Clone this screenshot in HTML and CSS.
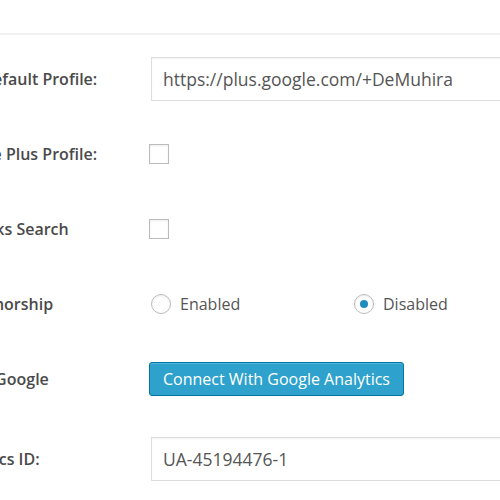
FILE: index.html
```html
<!DOCTYPE html>
<html lang="en">

<head>
    <meta charset="UTF-8">
    <meta name="viewport" content="width=device-width, initial-scale=1.0">
    <title>Google Settings</title>
    <link rel="stylesheet" href="styles.css">
</head>

<body>
    <div class="divider"></div>

    <div class="settings">
        <div class="row">
            <label class="row-label" for="gplus">Google Plus Default Profile:</label>
            <div class="row-field">
                <input class="text-input" id="gplus" type="text" value="https://plus.google.com/+DeMuhira">
            </div>
        </div>

        <div class="row">
            <label class="row-label">Disable Google Plus Profile:</label>
            <div class="row-field">
                <span class="checkbox"></span>
            </div>
        </div>

        <div class="row">
            <label class="row-label">Display Sitelinks Search</label>
            <div class="row-field">
                <span class="checkbox"></span>
            </div>
        </div>

        <div class="row">
            <label class="row-label">Advanced Authorship</label>
            <div class="row-field">
                <span class="radio-option"><span class="radio"></span>Enabled</span>
                <span class="radio-option"><span class="radio checked"></span>Disabled</span>
            </div>
        </div>

        <div class="row">
            <label class="row-label">Connect With Google</label>
            <div class="row-field">
                <button class="button-primary">Connect With Google Analytics</button>
            </div>
        </div>

        <div class="row row-last">
            <label class="row-label" for="gaid">Google Analytics ID:</label>
            <div class="row-field">
                <input class="text-input" id="gaid" type="text" value="UA-45194476-1">
            </div>
        </div>
    </div>
</body>

</html>
```

FILE: styles.css
```css
html, body {
    margin: 0;
    padding: 0;
    background-color: #fff;
    overflow: hidden;
    font-family: "Open Sans", "Liberation Sans", sans-serif;
    color: #444;
}

.divider {
    margin-top: 33px;
    height: 2px;
    background-color: #f1f1f1;
}

.settings {
    margin-top: 6px;
    margin-left: -113px;
}

.row {
    display: flex;
    align-items: center;
    height: 75px;
}

.row-last {
    margin-top: 5px;
}

.row-label {
    width: 262px;
    flex-shrink: 0;
    font-size: 16px;
    font-weight: 600;
    color: #4a4a4a;
    white-space: nowrap;
}

.row-field {
    display: flex;
    align-items: center;
    flex: 1;
}

.text-input {
    box-sizing: border-box;
    width: 420px;
    height: 44px;
    margin-left: 2px;
    padding: 0 11px;
    border: 1px solid #ddd;
    box-shadow: inset 0 1px 2px rgba(0, 0, 0, 0.05);
    font-family: "Open Sans", "Liberation Sans", sans-serif;
    font-size: 17.5px;
    color: #555;
    background: #fff;
}

.checkbox {
    box-sizing: border-box;
    width: 20px;
    height: 20px;
    border: 1px solid #bbb;
    box-shadow: inset 0 1px 2px rgba(0, 0, 0, 0.08);
    background: #fff;
}

.radio-option {
    display: flex;
    align-items: center;
    width: 201px;
    margin-left: 2px;
    font-size: 16px;
    color: #555;
}

.radio {
    box-sizing: border-box;
    width: 20px;
    height: 20px;
    margin-right: 9px;
    border: 1px solid #bbb;
    border-radius: 50%;
    box-shadow: inset 0 1px 2px rgba(0, 0, 0, 0.08);
    display: flex;
    align-items: center;
    justify-content: center;
}

.radio.checked::after {
    content: "";
    width: 8px;
    height: 8px;
    border-radius: 50%;
    background-color: #1e8cbe;
}

.button-primary {
    height: 34px;
    padding: 0 13px;
    border: 1px solid #0074a2;
    border-radius: 3px;
    background-color: #2ea2cc;
    box-shadow: inset 0 1px 0 rgba(120, 200, 230, 0.5);
    color: #fff;
    font-family: "Open Sans", "Liberation Sans", sans-serif;
    font-size: 16px;
}
```
